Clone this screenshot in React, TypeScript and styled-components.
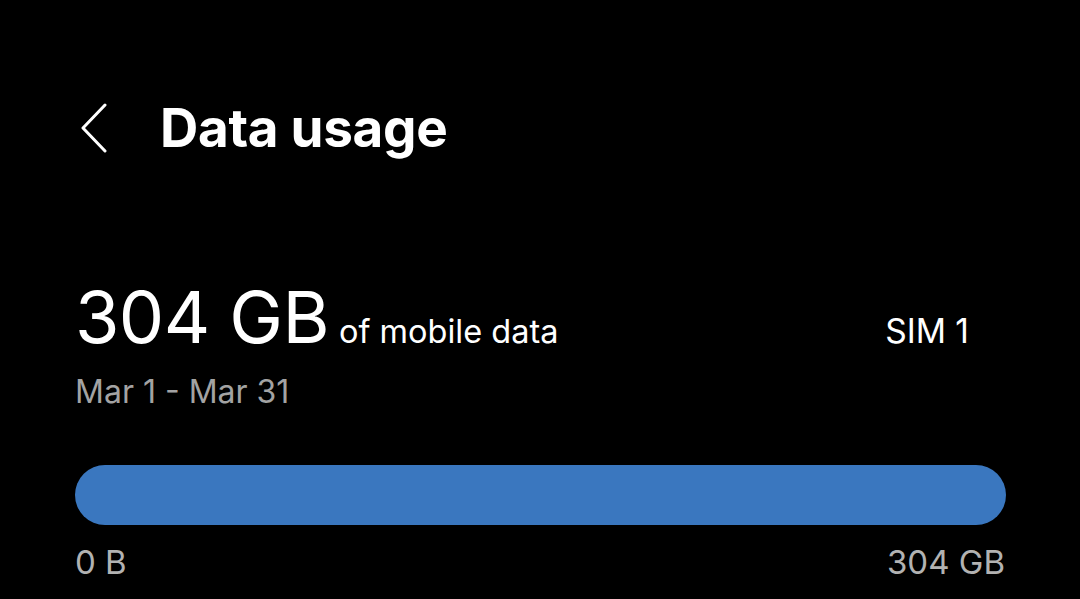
import { FC } from 'react';
import styled, { createGlobalStyle } from 'styled-components';

const GlobalStyle = createGlobalStyle`
  html, body {
    margin: 0;
    padding: 0;
    background: #000;
  }
  body {
    font-family: Inter, "Noto Sans", sans-serif;
    color: #fff;
  }
`;

const Screen = styled.div`
  width: 1080px;
  height: 599px;
  overflow: hidden;
  background: #000;
`;

const Header = styled.header`
  display: flex;
  align-items: center;
  height: 178px;
  padding: 78px 0 0 78px;
  box-sizing: border-box;
`;

const BackButton = styled.button`
  display: flex;
  align-items: center;
  justify-content: center;
  width: 32px;
  height: 52px;
  padding: 0;
  margin-right: 50px;
  border: none;
  background: transparent;
  color: #fff;
`;

const Title = styled.h1`
  margin: 0;
  font-size: 53px;
  font-weight: 700;
  letter-spacing: -0.3px;
  line-height: 1;
`;

const Summary = styled.section`
  padding: 0 75px;
  margin-top: 103px;
`;

const UsageRow = styled.div`
  display: flex;
  align-items: baseline;
`;

const Amount = styled.span`
  font-size: 72px;
  font-weight: 400;
  letter-spacing: -0.6px;
  line-height: 1;
`;

const AmountLabel = styled.span`
  margin-left: 10px;
  font-size: 32.5px;
  font-weight: 400;
`;

const Sim = styled.span`
  margin-left: auto;
  margin-right: 36px;
  font-size: 33.5px;
  font-weight: 400;
`;

const Period = styled.div`
  margin-top: 19px;
  font-size: 32px;
  color: #a3a3a3;
`;

const Bar = styled.div`
  margin-top: 54px;
  height: 60px;
  border-radius: 30px;
  background: #3a77bf;
  margin-right: -1px;
`;

const Scale = styled.div`
  display: flex;
  justify-content: space-between;
  margin-top: 17px;
  font-size: 33px;
  color: #b2b2b2;
`;

const BackIcon: FC = () => (
  <svg width="30" height="50" viewBox="0 0 30 50" fill="none">
    <path
      d="M26 2 L4 25 L26 48"
      stroke="currentColor"
      strokeWidth="3"
      strokeLinecap="round"
      strokeLinejoin="round"
    />
  </svg>
);

const App: FC = () => (
  <Screen>
    <GlobalStyle />
    <Header>
      <BackButton aria-label="Back">
        <BackIcon />
      </BackButton>
      <Title>Data usage</Title>
    </Header>
    <Summary>
      <UsageRow>
        <Amount>304 GB</Amount>
        <AmountLabel>of mobile data</AmountLabel>
        <Sim>SIM 1</Sim>
      </UsageRow>
      <Period>Mar 1 - Mar 31</Period>
      <Bar />
      <Scale>
        <span>0 B</span>
        <span>304 GB</span>
      </Scale>
    </Summary>
  </Screen>
);

export default App;
